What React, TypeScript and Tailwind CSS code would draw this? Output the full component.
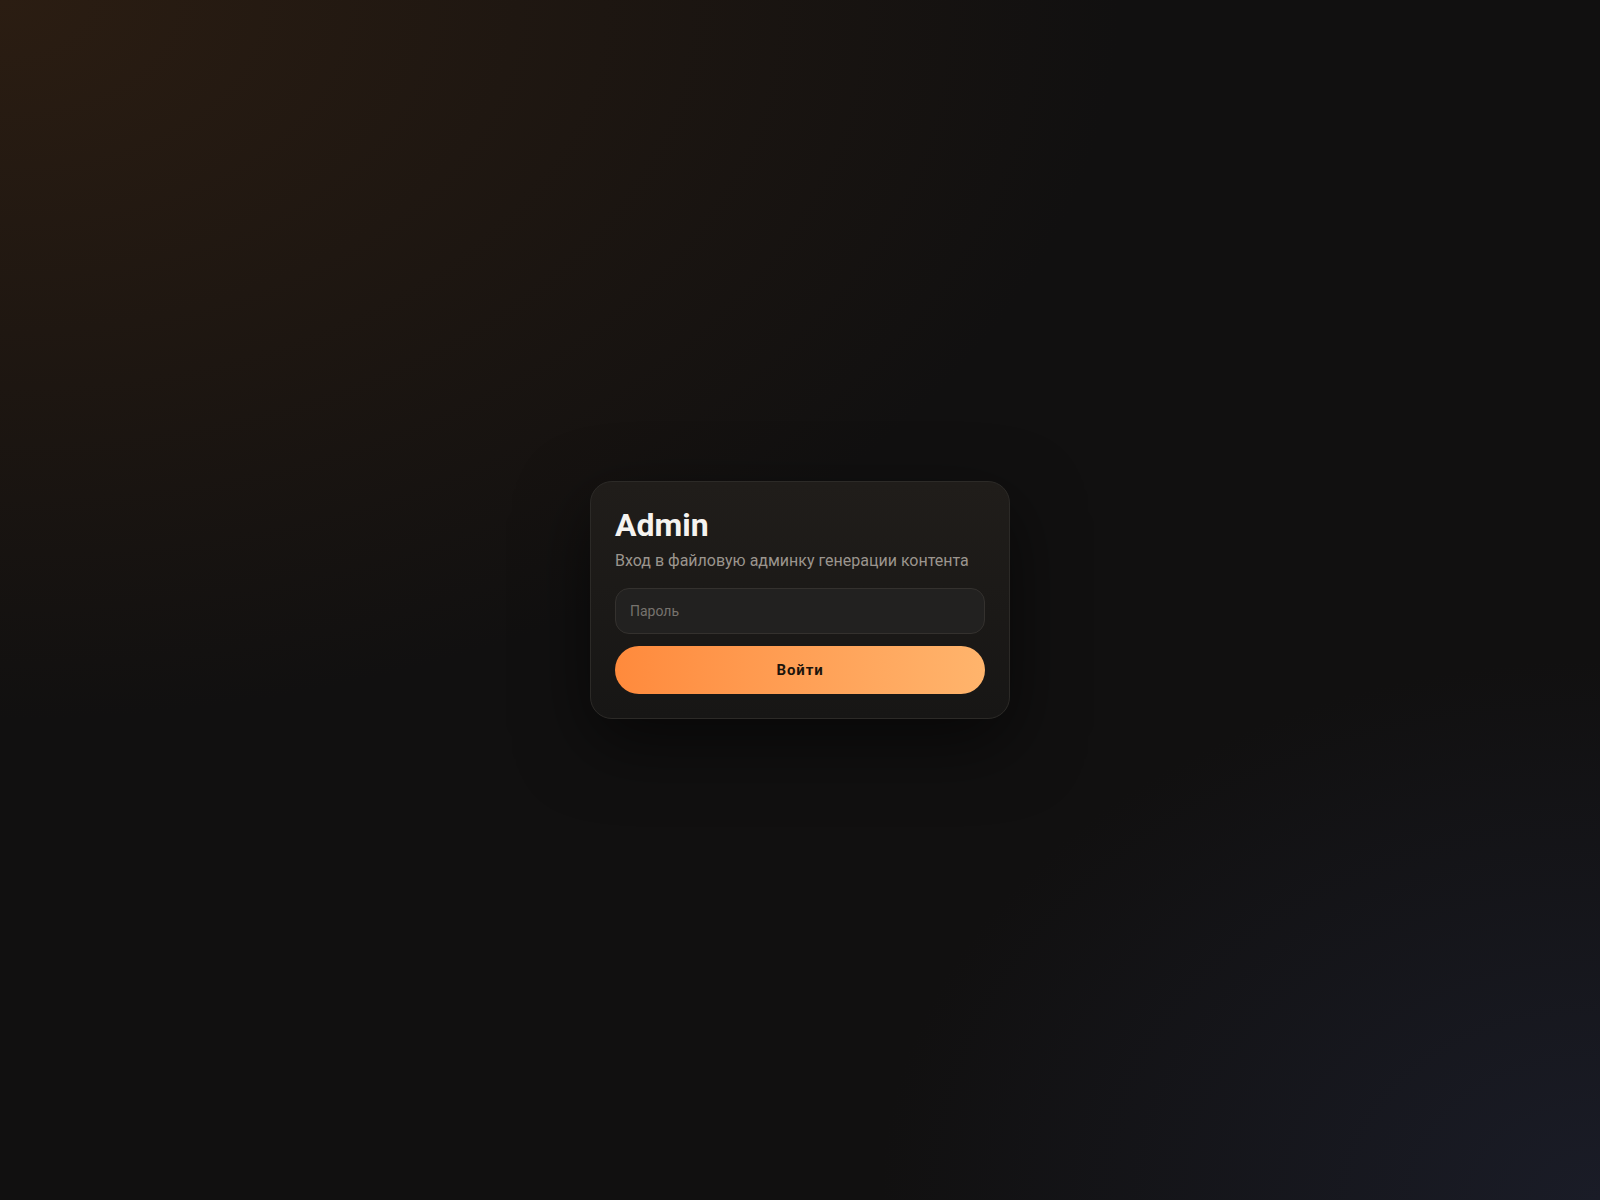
export default function App() {
  return (
    <div
      className="relative min-h-screen w-full overflow-hidden bg-[#111010] flex items-center justify-center px-4"
      style={{ fontFamily: "Roboto, 'Noto Sans', sans-serif" }}
    >
      {/* background glows */}
      <div className="pointer-events-none absolute inset-0 bg-[radial-gradient(ellipse_70%_60%_at_0%_0%,#2b1d12_0%,rgba(17,16,16,0)_100%)]" />
      <div className="pointer-events-none absolute inset-0 bg-[radial-gradient(ellipse_45%_45%_at_100%_100%,#1a1c27_0%,rgba(17,16,16,0)_100%)]" />

      {/* card */}
      <div className="relative w-full max-w-[420px] rounded-[22px] border border-[#2c2a27] bg-gradient-to-b from-[#201d1a] to-[#171615] p-6 shadow-[0_24px_70px_rgba(0,0,0,0.55)]">
        <h1 className="text-[32px] leading-[1.2] font-bold text-[#f5f3f0]">Admin</h1>
        <p className="mt-[5px] mb-[15px] text-[16px] leading-6 text-[#9b958e]">
          Вход в файловую админку генерации контента
        </p>
        <input
          type="password"
          autoFocus
          placeholder="Пароль"
          className="block h-[46px] w-full rounded-[14px] border border-[#34312e] bg-[#222120] px-[14px] text-[14px] text-[#eeeae5] placeholder:text-[#77736e] outline-none caret-white"
        />
        <button
          type="button"
          className="mt-3 block h-12 w-full rounded-full bg-gradient-to-r from-[#ff8a3c] to-[#ffb46c] text-[15px] font-bold tracking-[0.06em] text-[#1c140c]"
        >
          Войти
        </button>
      </div>
    </div>
  );
}
